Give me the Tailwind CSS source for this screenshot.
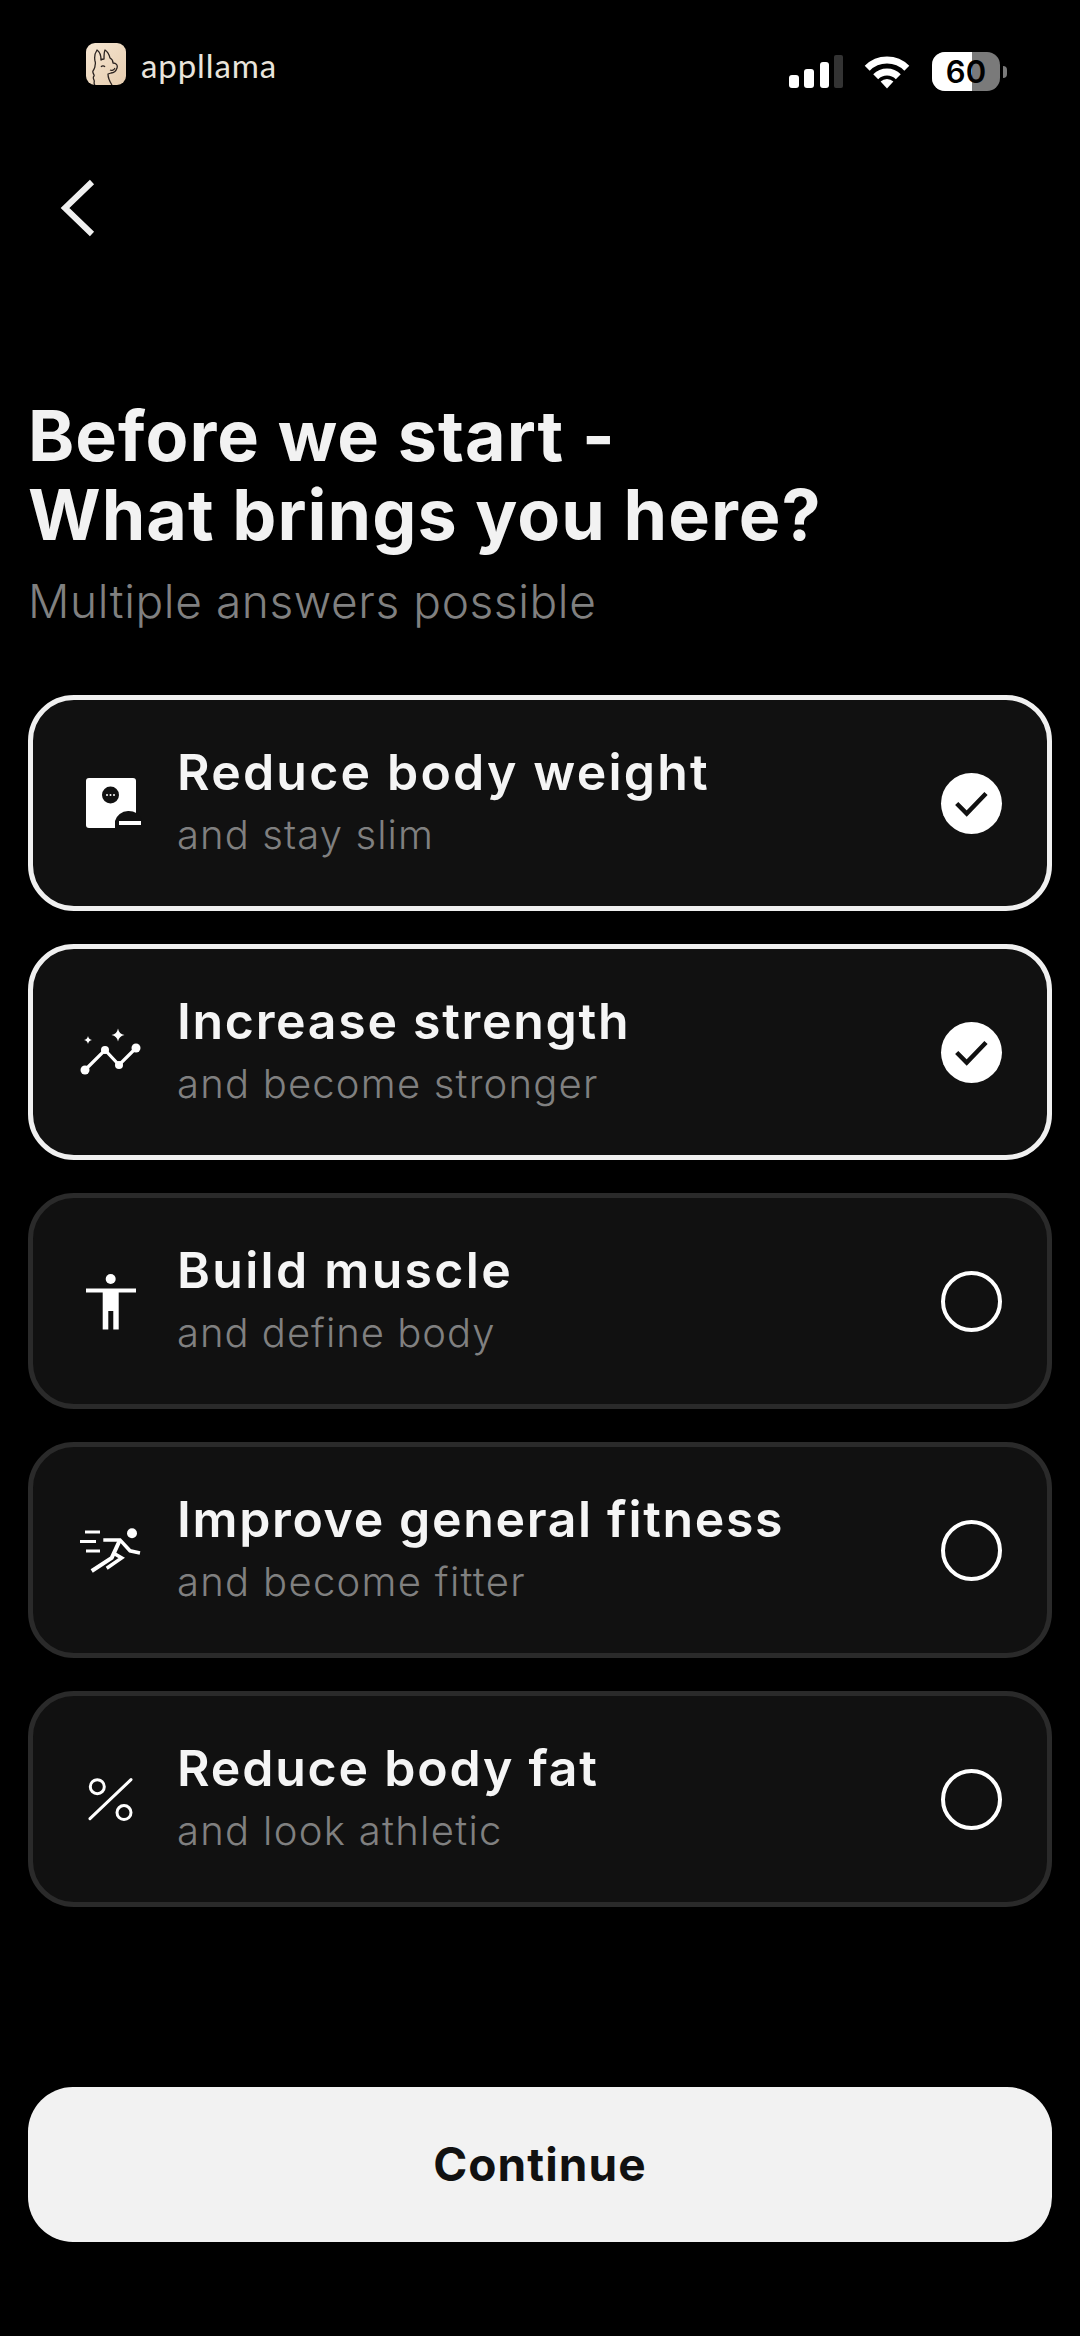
<!DOCTYPE html>
<html lang="en">
<head>
  <meta charset="UTF-8">
  <title>Before we start</title>
  <script src="https://cdn.jsdelivr.net/npm/@tailwindcss/browser@4"></script>
</head>
<body class="bg-black">
  <div class="w-[1080px] h-[2336px] bg-black flex flex-col font-['Inter',sans-serif] text-white overflow-hidden">

    <!-- status bar -->
    <div class="flex justify-between items-start pt-[42px] pl-[86px] pr-[73px]">
      <div class="flex items-center gap-[15px]">
        <svg class="w-[40px] h-[42px]" viewBox="0 0 40 42">
          <defs><linearGradient id="logo-bg" x1="0" y1="0" x2="1" y2="1"><stop offset="0" stop-color="#f6e6d2"/><stop offset="1" stop-color="#e6cdaf"/></linearGradient></defs>
          <rect width="40" height="42" rx="9" fill="url(#logo-bg)"/>
          <path d="M9 42c-2-2 0-3-1-5s-1-3 0-4-2-3-1-5 2-3 2-5 1-2 0-5c-1-5 0-8 2-11 3 2 4 6 4 10 1-1 2-1 3-1 0-4 0-7 1-9 3 2 4 4 5 8 2 1 3 3 3 5 3 0 5 2 4 5-1 3-3 5-6 5l-3 1c0 4 2 8 4 11" fill="none" stroke="#2b2320" stroke-width="1.3" stroke-linejoin="round"/>
          <path d="M15 24c1-1.500 3-1.500 4 0M24 27c2 1 4 0 5-2" fill="none" stroke="#2b2320" stroke-width="1.2"/>
        </svg>
        <span class="text-[33px] leading-[42px] font-normal text-[#e9e4dc] font-['Lato',sans-serif] mt-[2px] tracking-[0.9px]">appllama</span>
      </div>
      <div class="flex items-center mt-[10px]">
        <svg class="w-[54px] h-[33px]" viewBox="0 0 54 33">
          <rect x="0" y="20" width="10" height="13" rx="3" fill="#fff"/>
          <rect x="15" y="14" width="10" height="19" rx="3" fill="#fff"/>
          <rect x="31" y="7" width="9" height="26" rx="3" fill="#fff"/>
          <rect x="45" y="0" width="9" height="33" rx="2" fill="#333"/>
        </svg>
        <svg class="w-[46px] h-[34px] ml-[21px]" viewBox="0 0 46 34">
          <path d="M3.2 13.2a28 28 0 0 1 39.6 0M11.7 21.7a16 16 0 0 1 22.6 0" fill="none" stroke="#fff" stroke-width="7"/>
          <path d="M23 33.5L16.6 26.6A9 9 0 0 1 29.4 26.6Z" fill="#fff"/>
        </svg>
        <div class="relative w-[68px] h-[39px] ml-[22px] rounded-[13px] overflow-hidden bg-[#7a7a7a] flex items-center justify-center">
          <div class="absolute left-0 top-0 bottom-0 w-[40px] bg-white"></div>
          <span class="relative text-[31px] font-semibold text-black leading-none">60</span>
        </div>
        <div class="w-[4px] h-[12px] ml-[3px] bg-[#7a7a7a] rounded-r-full"></div>
      </div>
    </div>

    <!-- back -->
    <svg class="w-[40px] h-[60px] ml-[58px] mt-[86px]" viewBox="0 0 40 60">
      <path d="M34 5L7 31L34 57" fill="none" stroke="#f0f0f0" stroke-width="6"/>
    </svg>

    <h1 class="mt-[159px] pl-[28px] text-[70px] leading-[79px] font-bold text-[#f2f2f2] tracking-[1.050px]">Before we start -<br>What brings you here?</h1>
    <p class="mt-[22px] pl-[28px] text-[46px] leading-[50px] font-light text-[#808080] tracking-[0.6px]">Multiple answers possible</p>

    <!-- options -->
    <div class="mt-[69px] mx-[28px] flex flex-col gap-[33px]">

      <div class="h-[216px] rounded-[46px] border-[5px] border-[#f0f0f0] bg-[#111111] flex items-center pl-[45px] pr-[45px]">
        <svg class="w-[64px] h-[64px] shrink-0" viewBox="0 0 64 64">
          <rect x="8" y="7" width="50" height="50" rx="3" fill="#fff"/>
          <circle cx="32.5" cy="24" r="8.5" fill="#111"/>
          <circle cx="29" cy="24" r="1" fill="#fff"/><circle cx="32.5" cy="24" r="1" fill="#fff"/><circle cx="36" cy="24" r="1" fill="#fff"/>
          <path d="M37 57V50a14 13 0 0 1 27-1V57Z" fill="#111"/>
          <rect x="41" y="50" width="22" height="4" fill="#fff"/>
        </svg>
        <div class="ml-[35px] flex-1 pb-[3px]">
          <div class="text-[50px] leading-[58px] font-semibold text-[#f5f5f5] tracking-[2.2px]">Reduce body weight</div>
          <div class="mt-[9px] text-[40px] leading-[50px] font-light text-[#808080] tracking-[1.1px]">and stay slim</div>
        </div>
        <div class="w-[61px] h-[61px] rounded-full bg-white shrink-0">
          <svg class="w-[61px] h-[61px]" viewBox="0 0 61 61"><path d="M15.7 30.5L25.7 40.5L45 20.5" fill="none" stroke="#111" stroke-width="4.5"/></svg>
        </div>
      </div>

      <div class="h-[216px] rounded-[46px] border-[5px] border-[#f0f0f0] bg-[#111111] flex items-center pl-[45px] pr-[45px]">
        <svg class="w-[64px] h-[64px] shrink-0" viewBox="0 0 64 64">
          <path d="M7 50L27 30L41 45L58 28" fill="none" stroke="#fff" stroke-width="3.2"/>
          <circle cx="7" cy="50" r="4.5" fill="#fff"/><circle cx="27" cy="30" r="4" fill="#fff"/><circle cx="41" cy="45" r="4" fill="#fff"/><circle cx="58" cy="28" r="4.5" fill="#fff"/>
          <path d="M40 8.5Q41 14 46.500 15Q41 16 40 21.500Q39 16 33.500 15Q39 14 40 8.500Z" fill="#fff"/>
          <path d="M10 16Q10.700 19.300 14 20Q10.700 20.700 10 24Q9.300 20.700 6 20Q9.300 19.300 10 16Z" fill="#fff"/>
        </svg>
        <div class="ml-[35px] flex-1 pb-[3px]">
          <div class="text-[50px] leading-[58px] font-semibold text-[#f5f5f5] tracking-[1.7px]">Increase strength</div>
          <div class="mt-[9px] text-[40px] leading-[50px] font-light text-[#808080] tracking-[1.2px]">and become stronger</div>
        </div>
        <div class="w-[61px] h-[61px] rounded-full bg-white shrink-0">
          <svg class="w-[61px] h-[61px]" viewBox="0 0 61 61"><path d="M15.7 30.5L25.7 40.5L45 20.5" fill="none" stroke="#111" stroke-width="4.5"/></svg>
        </div>
      </div>

      <div class="h-[216px] rounded-[46px] border-[5px] border-[#2a2a2a] bg-[#111111] flex items-center pl-[45px] pr-[45px]">
        <svg class="w-[64px] h-[64px] shrink-0" viewBox="0 0 64 64">
          <circle cx="32.700" cy="10" r="5" fill="#fff"/>
          <rect x="8" y="19.500" width="50" height="4" fill="#fff"/>
          <path d="M24.700 23H40.700V60.600H35.300V42H30.300V60.600H24.700Z" fill="#fff"/>
        </svg>
        <div class="ml-[35px] flex-1 pb-[3px]">
          <div class="text-[50px] leading-[58px] font-semibold text-[#f5f5f5] tracking-[2.3px]">Build muscle</div>
          <div class="mt-[9px] text-[40px] leading-[50px] font-light text-[#808080] tracking-[1px]">and define body</div>
        </div>
        <div class="w-[61px] h-[61px] rounded-full border-[4px] border-white shrink-0"></div>
      </div>

      <div class="h-[216px] rounded-[46px] border-[5px] border-[#2a2a2a] bg-[#111111] flex items-center pl-[45px] pr-[45px]">
        <svg class="w-[64px] h-[64px] shrink-0" viewBox="0 0 64 64">
          <circle cx="54" cy="15.300" r="5" fill="#fff"/>
          <path d="M7 14H22M2 23.500H18M8 33H22" fill="none" stroke="#fff" stroke-width="3"/>
          <path d="M25.300 21.900H42L52 32.800L62 35" fill="none" stroke="#fff" stroke-width="3.500"/>
          <path d="M42 21.900L33.700 39.900L13.700 53" fill="none" stroke="#fff" stroke-width="4"/>
          <path d="M35.300 35L43.700 39.900L28.700 50.200" fill="none" stroke="#fff" stroke-width="3.500"/>
        </svg>
        <div class="ml-[35px] flex-1 pb-[3px]">
          <div class="text-[50px] leading-[58px] font-semibold text-[#f5f5f5] tracking-[1.65px]">Improve general fitness</div>
          <div class="mt-[9px] text-[40px] leading-[50px] font-light text-[#808080] tracking-[1.3px]">and become fitter</div>
        </div>
        <div class="w-[61px] h-[61px] rounded-full border-[4px] border-white shrink-0"></div>
      </div>

      <div class="h-[216px] rounded-[46px] border-[5px] border-[#2a2a2a] bg-[#111111] flex items-center pl-[45px] pr-[45px]">
        <svg class="w-[64px] h-[64px] shrink-0" viewBox="0 0 64 64">
          <circle cx="19.300" cy="19.700" r="7" fill="none" stroke="#fff" stroke-width="3"/>
          <circle cx="46" cy="45.600" r="7" fill="none" stroke="#fff" stroke-width="3"/>
          <path d="M12 51.700L53 12.600" fill="none" stroke="#fff" stroke-width="3" stroke-linecap="round"/>
        </svg>
        <div class="ml-[35px] flex-1 pb-[3px]">
          <div class="text-[50px] leading-[58px] font-semibold text-[#f5f5f5] tracking-[1.8px]">Reduce body fat</div>
          <div class="mt-[9px] text-[40px] leading-[50px] font-light text-[#808080] tracking-[1.3px]">and look athletic</div>
        </div>
        <div class="w-[61px] h-[61px] rounded-full border-[4px] border-white shrink-0"></div>
      </div>
    </div>

    <button class="mt-auto mb-[94px] mx-[28px] h-[155px] rounded-[45px] bg-[#f2f2f2] text-[#111111] text-[46px] font-bold tracking-[1.1px]">Continue</button>
  </div>
</body>
</html>
